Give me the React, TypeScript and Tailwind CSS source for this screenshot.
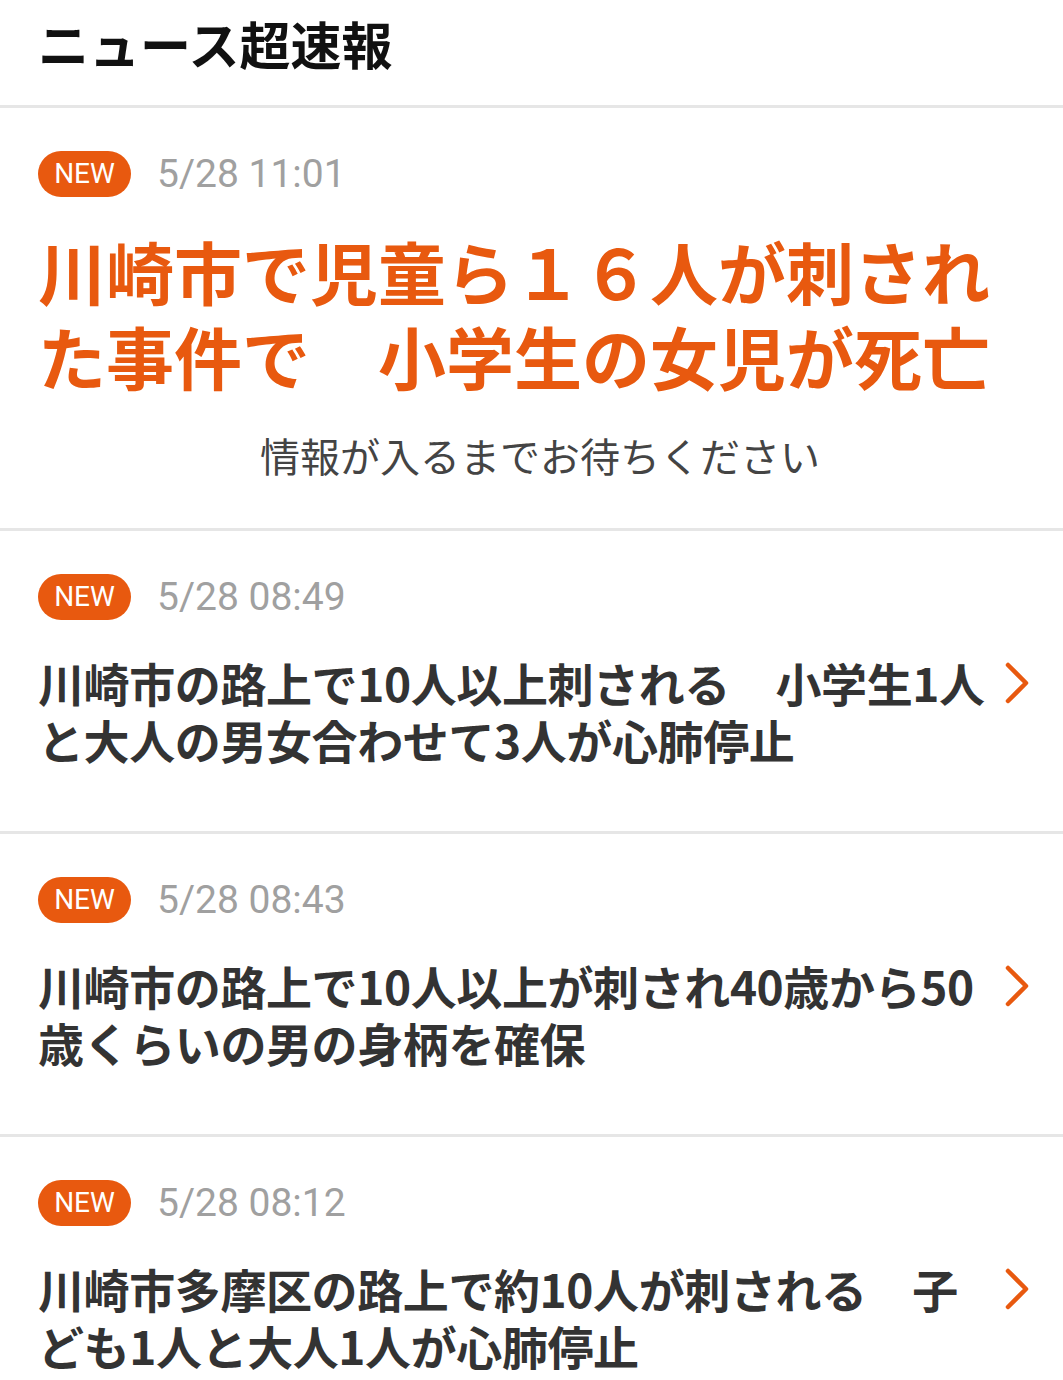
const jp = "font-['Noto_Sans_CJK_JP','Noto_Sans',sans-serif]"

interface Item { time: string; title: string }

const items: Item[] = [
  { time: '5/28 08:49', title: '川崎市の路上で10人以上刺される　小学生1人と大人の男女合わせて3人が心肺停止' },
  { time: '5/28 08:43', title: '川崎市の路上で10人以上が刺され40歳から50歳くらいの男の身柄を確保' },
  { time: '5/28 08:12', title: '川崎市多摩区の路上で約10人が刺される　子ども1人と大人1人が心肺停止' },
]

function Meta({ time }: { time: string }) {
  return (
    <div className="flex items-center h-[46px]">
      <span className="flex items-center justify-center w-[93px] h-[46px] rounded-full bg-[#e8590f] text-white text-[28px] font-['Roboto',sans-serif] leading-none">
        NEW
      </span>
      <span className="ml-[26px] text-[39px] text-[#a0a0a0] font-['Roboto',sans-serif] leading-none">{time}</span>
    </div>
  )
}

function Chevron() {
  return (
    <svg width="28" height="42" viewBox="0 0 28 42" fill="none">
      <path d="M5 3l18 18L5 39" stroke="#e8590f" strokeWidth="4.5" strokeLinecap="round" strokeLinejoin="round" />
    </svg>
  )
}

export default function App() {
  return (
    <main className={`min-h-screen bg-white ${jp}`}>
      <header className="h-[108px] flex items-center px-[38px] border-b-[3px] border-[#e6e6e6]">
        <h1 className="text-[51px] font-bold text-[#111] leading-none -mt-[18px]">ニュース超速報</h1>
      </header>

      <section className="px-[38px] pt-[43px] pb-[49px] border-b-[3px] border-[#e6e6e6]">
        <Meta time="5/28 11:01" />
        <h2 className="mt-[31px] text-[68px] leading-[85px] font-bold text-[#e8590f]">
          川崎市で児童ら１６人が刺された事件で　小学生の女児が死亡
        </h2>
        <p className="mt-[33px] pl-[17px] text-center text-[40px] leading-[48px] text-[#444]">
          情報が入るまでお待ちください
        </p>
      </section>

      {items.map((it) => (
        <section key={it.time} className="pl-[38px] pr-[30px] pt-[43px] pb-[63px] border-b-[3px] border-[#e6e6e6]">
          <Meta time={it.time} />
          <div className="mt-[34px] flex items-start">
            <p className="w-[960px] shrink-0 text-[46px] leading-[57px] font-bold tracking-[-0.4px] text-[#333]">{it.title}</p>
            <div className="ml-[5px] mt-[8px] shrink-0">
              <Chevron />
            </div>
          </div>
        </section>
      ))}
    </main>
  )
}
